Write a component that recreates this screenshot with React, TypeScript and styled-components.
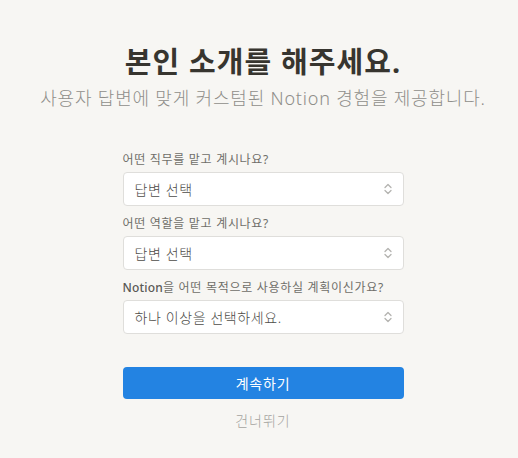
import React from 'react';
import styled, { createGlobalStyle } from 'styled-components';

const GlobalStyle = createGlobalStyle`
  html, body {
    margin: 0;
    padding: 0;
    background: #f7f6f3;
  }
  body {
    font-family: "Noto Sans", "Noto Sans CJK KR", sans-serif;
    color: #37352f;
  }
`;

const Page = styled.div`
  display: flex;
  flex-direction: column;
  align-items: center;
  padding: 44px 0 0 8px;
  min-height: 458px;
  box-sizing: border-box;
`;

const Title = styled.h1`
  margin: 0;
  font-size: 29px;
  line-height: 36px;
  font-weight: 700;
  color: #37352f;
  letter-spacing: 1.1px;
`;

const Subtitle = styled.p`
  margin: 5px 0 0;
  font-size: 18px;
  line-height: 26px;
  font-weight: 300;
  color: #8f8e8a;
  letter-spacing: 0.8px;
`;

const Form = styled.div`
  width: 281px;
  margin-top: 41px;
  display: flex;
  flex-direction: column;
`;

const Field = styled.div`
  display: flex;
  flex-direction: column;
  margin-bottom: 10px;
`;

const Label = styled.label`
  font-size: 12px;
  line-height: 16px;
  color: #6f6e69;
  letter-spacing: 0.7px;
  margin-bottom: 4px;
`;

const Brand = styled.span`
  font-weight: 500;
  color: #5a5955;
  letter-spacing: 0.2px;
`;

const Select = styled.div`
  height: 34px;
  box-sizing: border-box;
  background: #ffffff;
  border: 1px solid #dfdedb;
  border-radius: 4px;
  display: flex;
  align-items: center;
  justify-content: space-between;
  padding: 0 10px 0 11px;
  font-size: 14px;
  font-weight: 300;
  letter-spacing: 0.6px;
  color: #4d4c48;
`;

const Chevron = styled.svg`
  width: 10px;
  height: 14px;
  color: #b4b3b0;
`;

const Button = styled.button`
  margin-top: 23px;
  height: 32px;
  border: none;
  border-radius: 4px;
  background: #2383e2;
  color: #ffffff;
  font-family: inherit;
  font-size: 14px;
  letter-spacing: 0.8px;
  cursor: pointer;
`;

const Skip = styled.div`
  margin-top: 12px;
  text-align: center;
  font-size: 14px;
  line-height: 20px;
  font-weight: 300;
  letter-spacing: 1px;
  color: #a5a4a0;
`;

const UpDown = () => (
  <Chevron viewBox="0 0 10 14" fill="none" stroke="currentColor" strokeWidth="1.3" strokeLinecap="round" strokeLinejoin="round">
    <path d="M2 5.5 L5 2.5 L8 5.5" />
    <path d="M2 8.5 L5 11.5 L8 8.5" />
  </Chevron>
);

const fields = [
  { brand: '', label: '어떤 직무를 맡고 계시나요?', value: '답변 선택' },
  { brand: '', label: '어떤 역할을 맡고 계시나요?', value: '답변 선택' },
  { brand: 'Notion', label: '을 어떤 목적으로 사용하실 계획이신가요?', value: '하나 이상을 선택하세요.' },
];

const App: React.FC = () => {
  return (
    <>
      <GlobalStyle />
      <Page>
        <Title>본인 소개를 해주세요.</Title>
        <Subtitle>사용자 답변에 맞게 커스텀된 Notion 경험을 제공합니다.</Subtitle>
        <Form>
          {fields.map((f) => (
            <Field key={f.label}>
              <Label>
                {f.brand && <Brand>{f.brand}</Brand>}
                {f.label}
              </Label>
              <Select>
                {f.value}
                <UpDown />
              </Select>
            </Field>
          ))}
          <Button>계속하기</Button>
          <Skip>건너뛰기</Skip>
        </Form>
      </Page>
    </>
  );
};

export default App;
